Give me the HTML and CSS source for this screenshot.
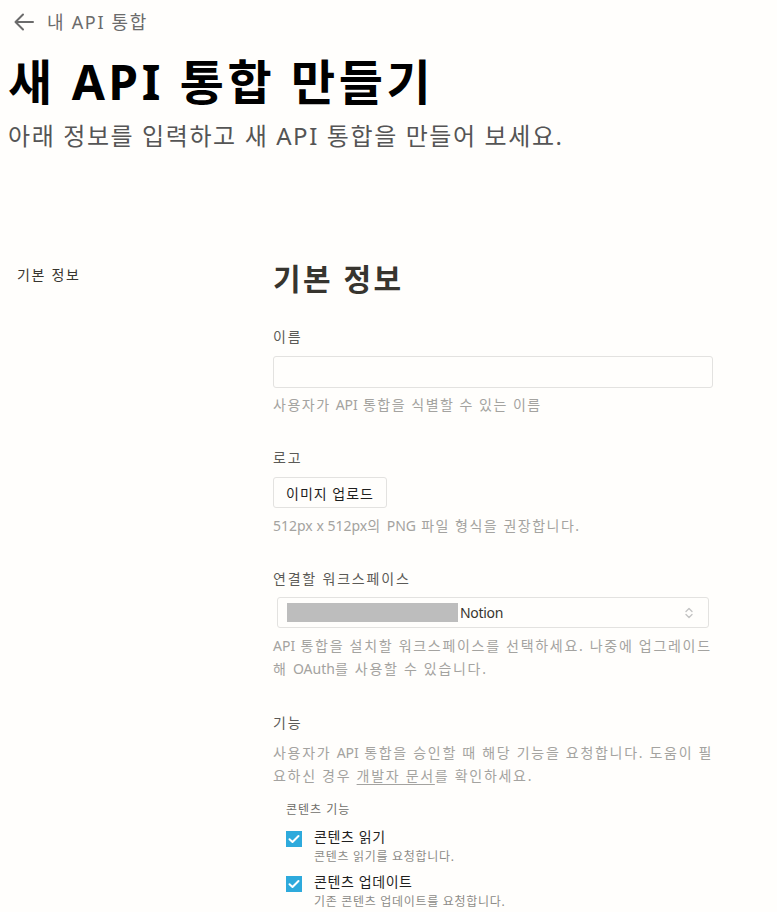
FILE: index.html
```html
<!DOCTYPE html>
<html lang="ko">
<head>
<meta charset="utf-8">
<title>새 API 통합 만들기</title>
<link rel="stylesheet" href="styles.css">
</head>
<body>
<header class="page-header">
  <a class="back-link" href="#">
    <svg class="back-icon" width="20" height="20" viewBox="0 0 20 20" fill="none" stroke="currentColor" stroke-width="2" stroke-linecap="round" stroke-linejoin="round">
      <path d="M19 10H2"/>
      <path d="M9 2.5L1.5 10L9 17.5"/>
    </svg>
    <span>내 API 통합</span>
  </a>
  <h1 class="title">새 API 통합 만들기</h1>
  <p class="subtitle">아래 정보를 입력하고 새 API 통합을 만들어 보세요.</p>
</header>

<section class="section">
  <div class="side-label">기본 정보</div>
  <div class="form">
    <h2 class="section-title">기본 정보</h2>

    <div class="field first">
      <label class="field-label">이름</label>
      <input class="text-input" type="text">
      <p class="hint">사용자가 <span class="lt0">API</span> 통합을 식별할 수 있는 이름</p>
    </div>

    <div class="field">
      <label class="field-label">로고</label>
      <button class="btn" type="button">이미지 업로드</button>
      <p class="hint"><span class="lt0">512px x 512px</span>의 <span class="lt0">PNG</span> 파일 형식을 권장합니다.</p>
    </div>

    <div class="field">
      <label class="field-label">연결할 워크스페이스</label>
      <div class="select">
        <span class="redacted"></span>
        <span class="select-text">Notion</span>
        <svg class="chevrons" width="10" height="14" viewBox="0 0 10 14" fill="none" stroke="currentColor" stroke-width="1.4" stroke-linecap="round" stroke-linejoin="round">
          <path d="M2 5.5L5 2.5L8 5.5"/>
          <path d="M2 8.5L5 11.5L8 8.5"/>
        </svg>
      </div>
      <p class="hint multi"><span class="lt0">API</span> 통합을 설치할 워크스페이스를 선택하세요. 나중에 업그레이드해 <span class="lt0">OAuth</span>를 사용할 수 있습니다.</p>
    </div>

    <div class="field">
      <label class="field-label">기능</label>
      <p class="hint multi desc">사용자가 <span class="lt0">API</span> 통합을 승인할 때 해당 기능을 요청합니다. 도움이 필요하신 경우 <a class="doc-link" href="#">개발자 문서</a>를 확인하세요.</p>

      <div class="caps">
        <div class="caps-title">콘텐츠 기능</div>
        <div class="check-row">
          <span class="checkbox">
            <svg width="16" height="16" viewBox="0 0 16 16" fill="none" stroke="#fff" stroke-width="2" stroke-linecap="round" stroke-linejoin="round"><path d="M3.5 8.2L6.5 11L12.5 5"/></svg>
          </span>
          <div class="check-text">
            <div class="check-label">콘텐츠 읽기</div>
            <div class="check-sub">콘텐츠 읽기를 요청합니다.</div>
          </div>
        </div>
        <div class="check-row">
          <span class="checkbox">
            <svg width="16" height="16" viewBox="0 0 16 16" fill="none" stroke="#fff" stroke-width="2" stroke-linecap="round" stroke-linejoin="round"><path d="M3.5 8.2L6.5 11L12.5 5"/></svg>
          </span>
          <div class="check-text">
            <div class="check-label">콘텐츠 업데이트</div>
            <div class="check-sub">기존 콘텐츠 업데이트를 요청합니다.</div>
          </div>
        </div>
      </div>
    </div>
  </div>
</section>
</body>
</html>
```

FILE: styles.css
```css
* { box-sizing: border-box; }

html, body {
  margin: 0;
  padding: 0;
  background: #fffefc;
}

body {
  font-family: "Noto Sans", "Noto Sans CJK KR", sans-serif;
  color: #37352f;
  font-size: 14px;
}

.lt0 { letter-spacing: 0; }

.page-header {
  padding: 10px 8px 0 8px;
}

.back-link {
  display: flex;
  align-items: center;
  gap: 13px;
  height: 24px;
  margin-left: 6px;
  color: #6b6b6b;
  text-decoration: none;
  font-size: 18px;
  line-height: 24px;
  letter-spacing: 1.7px;
}

.back-icon { flex: none; }

.title {
  margin: 20px 0 0 0;
  font-size: 48px;
  line-height: 56px;
  font-weight: 700;
  color: #000;
  letter-spacing: 3.5px;
}

.subtitle {
  margin: 10px 0 0 0;
  font-size: 24px;
  line-height: 32px;
  color: #555555;
  font-weight: 400;
  letter-spacing: 1.6px;
}

.section {
  display: grid;
  grid-template-columns: 256px 440px;
  padding-left: 17px;
  margin-top: 107px;
  padding-bottom: 40px;
}

.side-label {
  margin-top: 6px;
  font-size: 14px;
  line-height: 20px;
  color: #37352f;
  letter-spacing: 1.7px;
}

.section-title {
  margin: 0;
  font-size: 30px;
  line-height: 40px;
  font-weight: 700;
  color: #37352f;
  letter-spacing: 2.5px;
}

.field {
  display: flex;
  flex-direction: column;
  align-items: flex-start;
  margin-top: 33px;
}

.field.first { margin-top: 28px; }

.field-label {
  font-size: 14px;
  line-height: 20px;
  color: #5b5a56;
  letter-spacing: 1.8px;
}

.text-input {
  margin-top: 9px;
  width: 440px;
  height: 32px;
  border: 1px solid #e3e2e0;
  border-radius: 3px;
  background: #fffefc;
  font: inherit;
  padding: 0 8px;
}

.hint {
  margin: 7px 0 0 0;
  width: 444px;
  font-size: 14px;
  line-height: 20px;
  color: #a4a3a0;
  letter-spacing: 1.5px;
}

.hint.multi {
  line-height: 23px;
  margin-top: 6px;
  letter-spacing: 1.7px;
}

.hint.desc {
  margin-top: 8px;
}

.btn {
  margin-top: 9px;
  height: 31px;
  padding: 0 12px;
  background: #fffefc;
  border: 1px solid #e3e2e0;
  border-radius: 3px;
  font: inherit;
  font-size: 14px;
  color: #1f1f1f;
  letter-spacing: 1px;
}

.btn + .hint { margin-top: 8px; }

.select {
  margin: 8px 4px 0 4px;
  width: 432px;
  height: 31px;
  border: 1px solid #e3e2e0;
  border-radius: 3px;
  display: flex;
  align-items: center;
  padding: 0 14px 0 9px;
}

.redacted {
  width: 171px;
  height: 19px;
  background: #bdbdbd;
  flex: none;
}

.select-text {
  margin-left: 2px;
  flex: 1;
  font-size: 14px;
  color: #37352f;
  letter-spacing: -0.3px;
}

.chevrons {
  color: #c4c4c4;
  flex: none;
}

.doc-link {
  color: inherit;
  text-decoration: underline;
  text-underline-offset: 3px;
}

.caps {
  margin-top: 15px;
  padding-left: 13px;
}

.caps-title {
  font-size: 12px;
  line-height: 16px;
  color: #6f6e6a;
  letter-spacing: 1px;
}

.check-row {
  display: flex;
  align-items: flex-start;
  gap: 12px;
  margin-top: 9px;
}

.check-row + .check-row { margin-top: 7px; }

.checkbox {
  margin-top: 4px;
  width: 16px;
  height: 16px;
  background: #2eaadc;
  flex: none;
  display: flex;
}

.check-label {
  font-size: 14px;
  line-height: 20px;
  color: #1f1f1f;
  letter-spacing: 0.6px;
}

.check-sub {
  margin-top: 2px;
  font-size: 12px;
  line-height: 16px;
  color: #8d8c88;
  letter-spacing: 0.7px;
}
```
